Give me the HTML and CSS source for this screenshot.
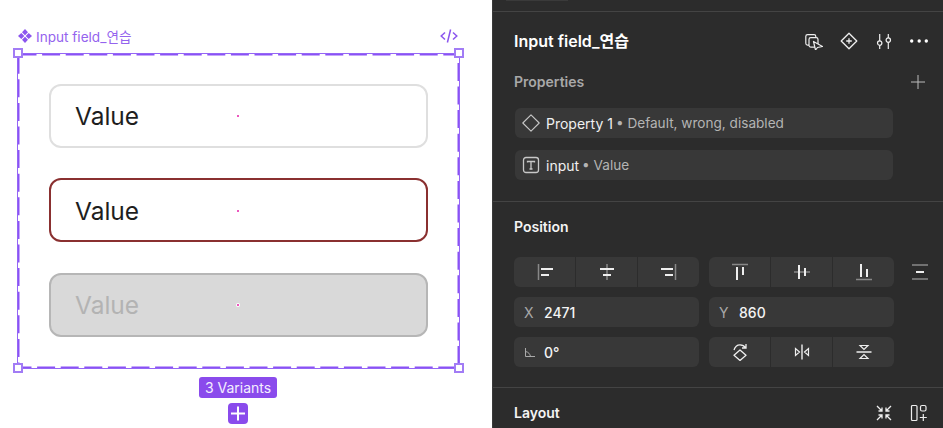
FILE: index.html
```html
<!DOCTYPE html>
<html lang="ko">
<head>
<meta charset="utf-8">
<title>Input field</title>
<link rel="stylesheet" href="styles.css">
</head>
<body>
<main class="app">
  <section class="canvas">
    <div class="stack">
      <div class="set-label">
        <span class="set-name">
          <svg class="set-glyph" viewBox="0 0 14 14" fill="currentColor"><path d="M7 0 10 3.300 7 6.300 4 3.300zM3.300 4 6.300 7 3.300 10 0 7zM10.700 4 14 7l-3.300 3L7.700 7zM7 7.700l3 3L7 14l-3-3.300z"/></svg>
          Input field_연습
        </span>
        <svg class="code-glyph" viewBox="0 0 18 14" fill="none" stroke="currentColor" stroke-width="1.500"><path d="M5 3.500 1.200 7 5 10.500M13 3.500 16.800 7 13 10.500M10.600 .5 7.400 13.500"/></svg>
      </div>
      <div class="frame">
        <svg class="dashes"><rect x=".5" y=".5" width="440" height="313" fill="none" stroke="#8a52f5" stroke-width="2" stroke-dasharray="18 5.600"/></svg>
        <span class="handle handle-tl"></span><span class="handle handle-tr"></span><span class="handle handle-bl"></span><span class="handle handle-br"></span>
        <div class="field"><span>Value</span><i class="dot"></i></div>
        <div class="field field-wrong"><span>Value</span><i class="dot"></i></div>
        <div class="field field-disabled"><span>Value</span><i class="dot"></i></div>
      </div>
      <div class="variants">3 Variants</div>
      <div class="add-variant">
        <svg viewBox="0 0 20 20" fill="none" stroke="#fff" stroke-width="2"><path d="M10 3v14M3 10h14"/></svg>
      </div>
    </div>
  </section>

  <aside class="panel">
    <div class="topbar"><span class="topchip"></span></div>

    <div class="section section-props">
      <header class="title-row">
        <h1>Input field_연습</h1>
        <div class="title-icons">
          <svg class="icon" viewBox="0 0 18 18" fill="none" stroke="#eee" stroke-width="1.200"><rect x=".8" y="2.600" width="10" height="10.500" rx="1.800"/><rect x="4" y="5.600" width="9" height="9.500" rx="1.800" fill="#2c2c2c"/><path d="M8.500 9.500 10.500 18 12.500 15.500 17.500 14.500z" fill="#2c2c2c" stroke-linejoin="round"/></svg>
          <svg class="icon" viewBox="0 0 18 18" fill="none" stroke="#eee" stroke-width="1.300"><path d="M9 1.200 16.800 9 9 16.800 1.200 9z" stroke-linejoin="round"/><path d="M9 6.200v5.600M6.200 9h5.600"/></svg>
          <svg class="icon" viewBox="0 0 18 18" fill="none" stroke="#eee" stroke-width="1.200"><path d="M4.700 2v7M4.700 13.300V17M13.300 2v4M13.300 10.300V17"/><circle cx="4.700" cy="11.100" r="2.200"/><circle cx="13.300" cy="8.100" r="2.200"/></svg>
          <svg class="icon" viewBox="0 0 18 18" fill="#fff"><circle cx="1.700" cy="9" r="1.700"/><circle cx="9.200" cy="9" r="1.700"/><circle cx="16.300" cy="9" r="1.700"/></svg>
        </div>
      </header>
      <div class="props-head">
        <h2 class="muted-head">Properties</h2>
        <svg class="plus" viewBox="0 0 14 14" fill="none" stroke="#bbb" stroke-width="1"><path d="M7 0v14M0 7h14"/></svg>
      </div>
      <div class="prop-row">
        <svg class="prop-icon" viewBox="0 0 18 18" fill="none" stroke="#c8c8c8" stroke-width="1.100"><path d="M9 .8 17.200 9 9 17.200.8 9z" stroke-linejoin="round"/></svg>
        <span class="prop-name">Property 1</span><span class="prop-value">• Default, wrong, disabled</span>
      </div>
      <div class="prop-row prop-row-second">
        <svg class="prop-icon" viewBox="0 0 18 18" fill="none" stroke="#c8c8c8" stroke-width="1.300"><rect x="1.500" y="1.500" width="15" height="15" rx="2.500"/><path d="M5.500 6.500v-1h7v1M9 5.500v7.500M7.500 13h3"/></svg>
        <span class="prop-name">input</span><span class="prop-value">• Value</span>
      </div>
    </div>

    <div class="section section-position">
      <h2 class="head">Position</h2>
      <div class="grid">
        <div class="seg">
          <div class="seg-cell"><svg class="seg-icon" viewBox="0 0 18 18" fill="none"><path d="M2.500 1v16" stroke="#888" stroke-width="1.500"/><path d="M5 6h12M5 12h8" stroke="#eee" stroke-width="2"/></svg></div>
          <div class="seg-cell"><svg class="seg-icon" viewBox="0 0 18 18" fill="none"><path d="M9 1v16" stroke="#888" stroke-width="1.500"/><path d="M2 6h14M5 12h8" stroke="#eee" stroke-width="2"/></svg></div>
          <div class="seg-cell"><svg class="seg-icon" viewBox="0 0 18 18" fill="none"><path d="M15.500 1v16" stroke="#888" stroke-width="1.500"/><path d="M1 6h12M5 12h8" stroke="#eee" stroke-width="2"/></svg></div>
        </div>
        <div class="seg">
          <div class="seg-cell"><svg class="seg-icon" viewBox="0 0 18 18" fill="none"><path d="M1 1.500h16" stroke="#888" stroke-width="1.500"/><path d="M6 4v13M12 4v8" stroke="#eee" stroke-width="2"/></svg></div>
          <div class="seg-cell"><svg class="seg-icon" viewBox="0 0 18 18" fill="none"><path d="M1 9h16" stroke="#888" stroke-width="1.500"/><path d="M6 2v14M12 5v8" stroke="#eee" stroke-width="2"/></svg></div>
          <div class="seg-cell"><svg class="seg-icon" viewBox="0 0 18 18" fill="none"><path d="M1 16.500h16" stroke="#888" stroke-width="1.500"/><path d="M6 1v13M12 6v8" stroke="#eee" stroke-width="2"/></svg></div>
        </div>
        <svg class="side-icon" viewBox="0 0 18 18" fill="none"><path d="M1 2h16M1 16h16" stroke="#888" stroke-width="1.500"/><path d="M5 9h8" stroke="#eee" stroke-width="2"/></svg>

        <div class="num"><span class="num-label">X</span><span class="num-value">2471</span></div>
        <div class="num"><span class="num-label">Y</span><span class="num-value">860</span></div>
        <span></span>

        <div class="num">
          <svg class="angle" viewBox="0 0 11 11" fill="none" stroke="#aaa"><path d="M1.500 1v8.500H11M1.500 4.500C4.500 5 6 7 6.500 9.500"/></svg>
          <span class="num-value">0°</span>
        </div>
        <div class="seg">
          <div class="seg-cell"><svg class="seg-icon" viewBox="0 0 18 18" fill="none" stroke="#eee" stroke-width="1.300"><path d="M9 7 15 12.300 9 17.500 3 12.300z" stroke-linejoin="round"/><path d="M3 7C4 3.500 6.300 1.800 9 1.800c2.300 0 4.300 1 5.500 3M15 1v4h-4"/></svg></div>
          <div class="seg-cell"><svg class="seg-icon" viewBox="0 0 18 18" fill="none" stroke="#eee" stroke-width="1.200"><path d="M9 1.500v15" stroke-width="1.400"/><path d="M6.500 9 2.500 5.500v7zM11.500 9l4-3.500v7z"/></svg></div>
          <div class="seg-cell"><svg class="seg-icon" viewBox="0 0 18 18" fill="none" stroke="#eee" stroke-width="1.200"><path d="M1.500 9h15" stroke-width="1.400"/><path d="M5 2.500h8L9 6.500zM5 15.500h8L9 11.500z"/></svg></div>
        </div>
        <span></span>
      </div>
    </div>

    <div class="section section-layout">
      <h2 class="head">Layout</h2>
      <div class="layout-icons">
        <svg class="icon" viewBox="0 0 18 18" fill="none" stroke="#eee" stroke-width="1.300"><path d="M2 2l5 5M7 3.500V7H3.500M16 2l-5 5M11 3.500V7h3.500M2 16l5-5M7 14.500V11H3.500M16 16l-5-5M11 14.500V11h3.500"/></svg>
        <svg class="icon" viewBox="0 0 18 18" fill="none" stroke="#eee" stroke-width="1.200"><rect x="1.500" y="1.500" width="5.500" height="15" rx="1"/><rect x="10.500" y="1.500" width="5.500" height="5.500" rx="1.500"/><path d="M13.300 10v7M9.800 13.500h7"/></svg>
      </div>
    </div>
  </aside>
</main>
</body>
</html>
```
FILE: styles.css
```css
* { box-sizing: border-box; }
html, body { margin: 0; height: 100%; overflow: hidden; }
body { font-family: Inter, "Noto Sans CJK KR", sans-serif; background: #fff; }
h1, h2 { margin: 0; }

.app { display: flex; width: 943px; height: 428px; overflow: hidden; }

/* canvas */
.canvas { width: 492px; flex: none; background: #fff; padding: 27px 0 0 17px; }
.stack { width: 443px; display: flex; flex-direction: column; align-items: center; }
.set-label { width: 100%; height: 18px; margin-bottom: 8px; display: flex; justify-content: space-between; align-items: center; color: #8b55ee; padding: 0 1px; }
.set-name { display: flex; align-items: center; gap: 4px; font-size: 13.6px; color: #9463ee; }
.set-glyph { width: 14px; height: 14px; color: #8b55ee; }
.code-glyph { width: 18px; height: 14px; color: #8b55ee; margin-right: 1px; }

.frame { position: relative; width: 443px; height: 316px; border: 1px solid #9566f6; padding: 30px 31px; background: #fff; flex: none; }
.dashes { position: absolute; left: 0; top: 0; width: 441px; height: 314px; }
.handle { position: absolute; width: 10px; height: 10px; background: #fff; border: 2px solid #a27cf5; }
.handle-tl { left: -5px; top: -6px; }
.handle-tr { right: -5px; top: -6px; }
.handle-bl { left: -5px; bottom: -5px; }
.handle-br { right: -5px; bottom: -5px; }

.field { position: relative; width: 379px; height: 64px; border: 2px solid #dfdfdf; border-radius: 12px; background: #fff; display: flex; align-items: center; padding-left: 24px; font-size: 24.500px; color: #1e1e1e; margin-bottom: 30px; }
.field-wrong { border-color: #8a3030; padding-top: 1px; margin-bottom: 31px; }
.field-wrong .dot { margin-top: 0; }
.field-disabled { border-color: #b6b6b6; background: #d9d9d9; color: #b3b3b3; margin-bottom: 0; }
.dot { position: absolute; left: 186px; top: 50%; width: 2px; height: 2px; margin-top: -1px; background: #e61fa8; border-radius: 50%; }
.field-disabled .dot { box-shadow: 0 0 0 1px #fff; }

.variants { margin: 8px 1px 0 0; height: 21px; width: 78px; background: #8a4bec; color: #f4eeff; border-radius: 3px; font-size: 14px; line-height: 21px; text-align: center; flex: none; }
.add-variant { margin: 5px 1px 0 0; width: 20px; height: 21px; background: #8a4bec; border-radius: 4px; flex: none; }
.add-variant svg { display: block; width: 20px; height: 21px; }

/* panel */
.panel { flex: 1; min-width: 0; background: #2c2c2c; border-left: 1px solid #3a3a3a; color: #fff; display: flex; flex-direction: column; }
.topbar { height: 12px; border-bottom: 1px solid #444; padding-left: 13px; flex: none; }
.topchip { display: block; width: 62px; height: 1px; background: #3a3a3a; }
.section { padding: 0 15px 0 21px; border-bottom: 1px solid #444; flex: none; }
.section-props { height: 190px; padding-top: 19px; }
.section-position { height: 186px; padding-top: 16px; }
.section-layout { border-bottom: 0; padding-top: 16px; display: flex; justify-content: space-between; align-items: center; }

.title-row { display: flex; justify-content: space-between; align-items: center; height: 20px; }
.title-row h1 { font-size: 16px; line-height: 20px; font-weight: 600; color: #fff; }
.title-icons { display: flex; gap: 17px; }
.icon { display: block; width: 18px; height: 18px; flex: none; }

.props-head { display: flex; justify-content: space-between; align-items: center; margin-top: 20px; height: 22px; padding-right: 3px; }
.muted-head { font-size: 14px; font-weight: 600; color: #a8a8a8; line-height: 22px; }
.plus { display: block; width: 14px; height: 14px; }

.prop-row { margin: 15px 0 0 1px; width: 378px; height: 30px; background: #383838; border-radius: 6px; display: flex; align-items: center; padding-left: 7px; font-size: 14px; }
.prop-row-second { margin-top: 12px; }
.prop-icon { width: 18px; height: 18px; margin-right: 6px; flex: none; }
.prop-name { color: #f0f0f0; margin-right: 3px; }
.prop-value { color: #b4b4b4; font-size: 13.600px; }

.head { font-size: 14px; font-weight: 600; color: #f4f4f4; line-height: 18px; }

.grid { margin-top: 21px; display: grid; grid-template-columns: 185px 185px 34px; column-gap: 10px; row-gap: 10px; grid-auto-rows: 30px; }
.seg { display: grid; grid-template-columns: 1fr 1fr 1fr; gap: 1px; border-radius: 6px; overflow: hidden; }
.seg-cell { background: #383838; display: flex; align-items: center; justify-content: center; }
.seg-icon { display: block; width: 18px; height: 18px; }
.side-icon { display: block; width: 18px; height: 18px; align-self: center; margin-left: 7px; }
.num { background: #383838; border-radius: 6px; display: flex; align-items: center; padding-left: 10px; font-size: 14px; }
.num-label { width: 20px; color: #a8a8a8; }
.num-value { color: #f4f4f4; font-weight: 500; }
.angle { width: 11px; height: 11px; margin-right: 9px; flex: none; }

.layout-icons { display: flex; gap: 17px; }
```
